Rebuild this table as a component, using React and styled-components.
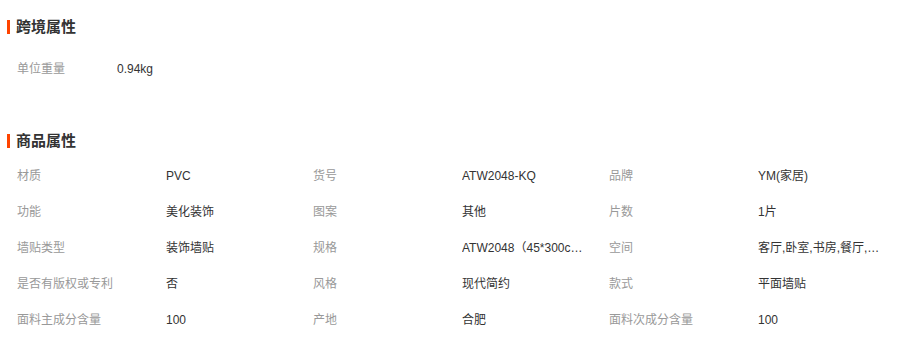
import React from 'react'
import styled, { createGlobalStyle } from 'styled-components'

const crossBorder = [{ label: '单位重量', value: '0.94kg' }]

const goods = [
  { label: '材质', value: 'PVC' },
  { label: '货号', value: 'ATW2048-KQ' },
  { label: '品牌', value: 'YM(家居)' },
  { label: '功能', value: '美化装饰' },
  { label: '图案', value: '其他' },
  { label: '片数', value: '1片' },
  { label: '墙贴类型', value: '装饰墙贴' },
  { label: '规格', value: 'ATW2048（45*300cm）' },
  { label: '空间', value: '客厅,卧室,书房,餐厅,玄关,过道' },
  { label: '是否有版权或专利', value: '否' },
  { label: '风格', value: '现代简约' },
  { label: '款式', value: '平面墙贴' },
  { label: '面料主成分含量', value: '100' },
  { label: '产地', value: '合肥' },
  { label: '面料次成分含量', value: '100' },
]

function App() {
  return (
    <Page>
      <GlobalStyle />
      <Section $top={17}>
        <Title>跨境属性</Title>
        <SimpleList>
          {crossBorder.map((item) => (
            <React.Fragment key={item.label}>
              <Label>{item.label}</Label>
              <Value>{item.value}</Value>
            </React.Fragment>
          ))}
        </SimpleList>
      </Section>
      <Section $top={44}>
        <Title>商品属性</Title>
        <Grid>
          {goods.map((item) => (
            <React.Fragment key={item.label}>
              <Label>{item.label}</Label>
              <Value title={item.value}>{item.value}</Value>
            </React.Fragment>
          ))}
        </Grid>
      </Section>
    </Page>
  )
}

const GlobalStyle = createGlobalStyle`
    body {
        margin: 0;
        background: #fff;
        font-family: "Liberation Sans", "Noto Sans CJK SC", sans-serif;
    }
`

const Page = styled.div`
    width: 905px;
    height: 355px;
    overflow: hidden;
`

const Section = styled.section`
    margin-top: ${(p) => p.$top}px;
`

const Title = styled.h3`
    margin: 0;
    height: 20px;
    line-height: 20px;
    padding-left: 16px;
    position: relative;
    font-size: 15px;
    font-weight: bold;
    color: #333;
    &::before {
        content: "";
        position: absolute;
        left: 7px;
        top: 3px;
        width: 3px;
        height: 14px;
        background: #ff4400;
    }
`

const SimpleList = styled.div`
    display: grid;
    grid-template-columns: 100px 200px;
    padding: 14px 0 0 17px;
    line-height: 36px;
    font-size: 12px;
`

const Grid = styled.div`
    display: grid;
    grid-template-columns: repeat(3, 149px 147px);
    padding: 7px 0 0 17px;
    line-height: 36px;
    font-size: 12px;
`

const Label = styled.div`
    color: #999;
    white-space: nowrap;
`

const Value = styled.div`
    color: #333;
    max-width: 122px;
    white-space: nowrap;
    overflow: hidden;
    text-overflow: ellipsis;
`

export default App
